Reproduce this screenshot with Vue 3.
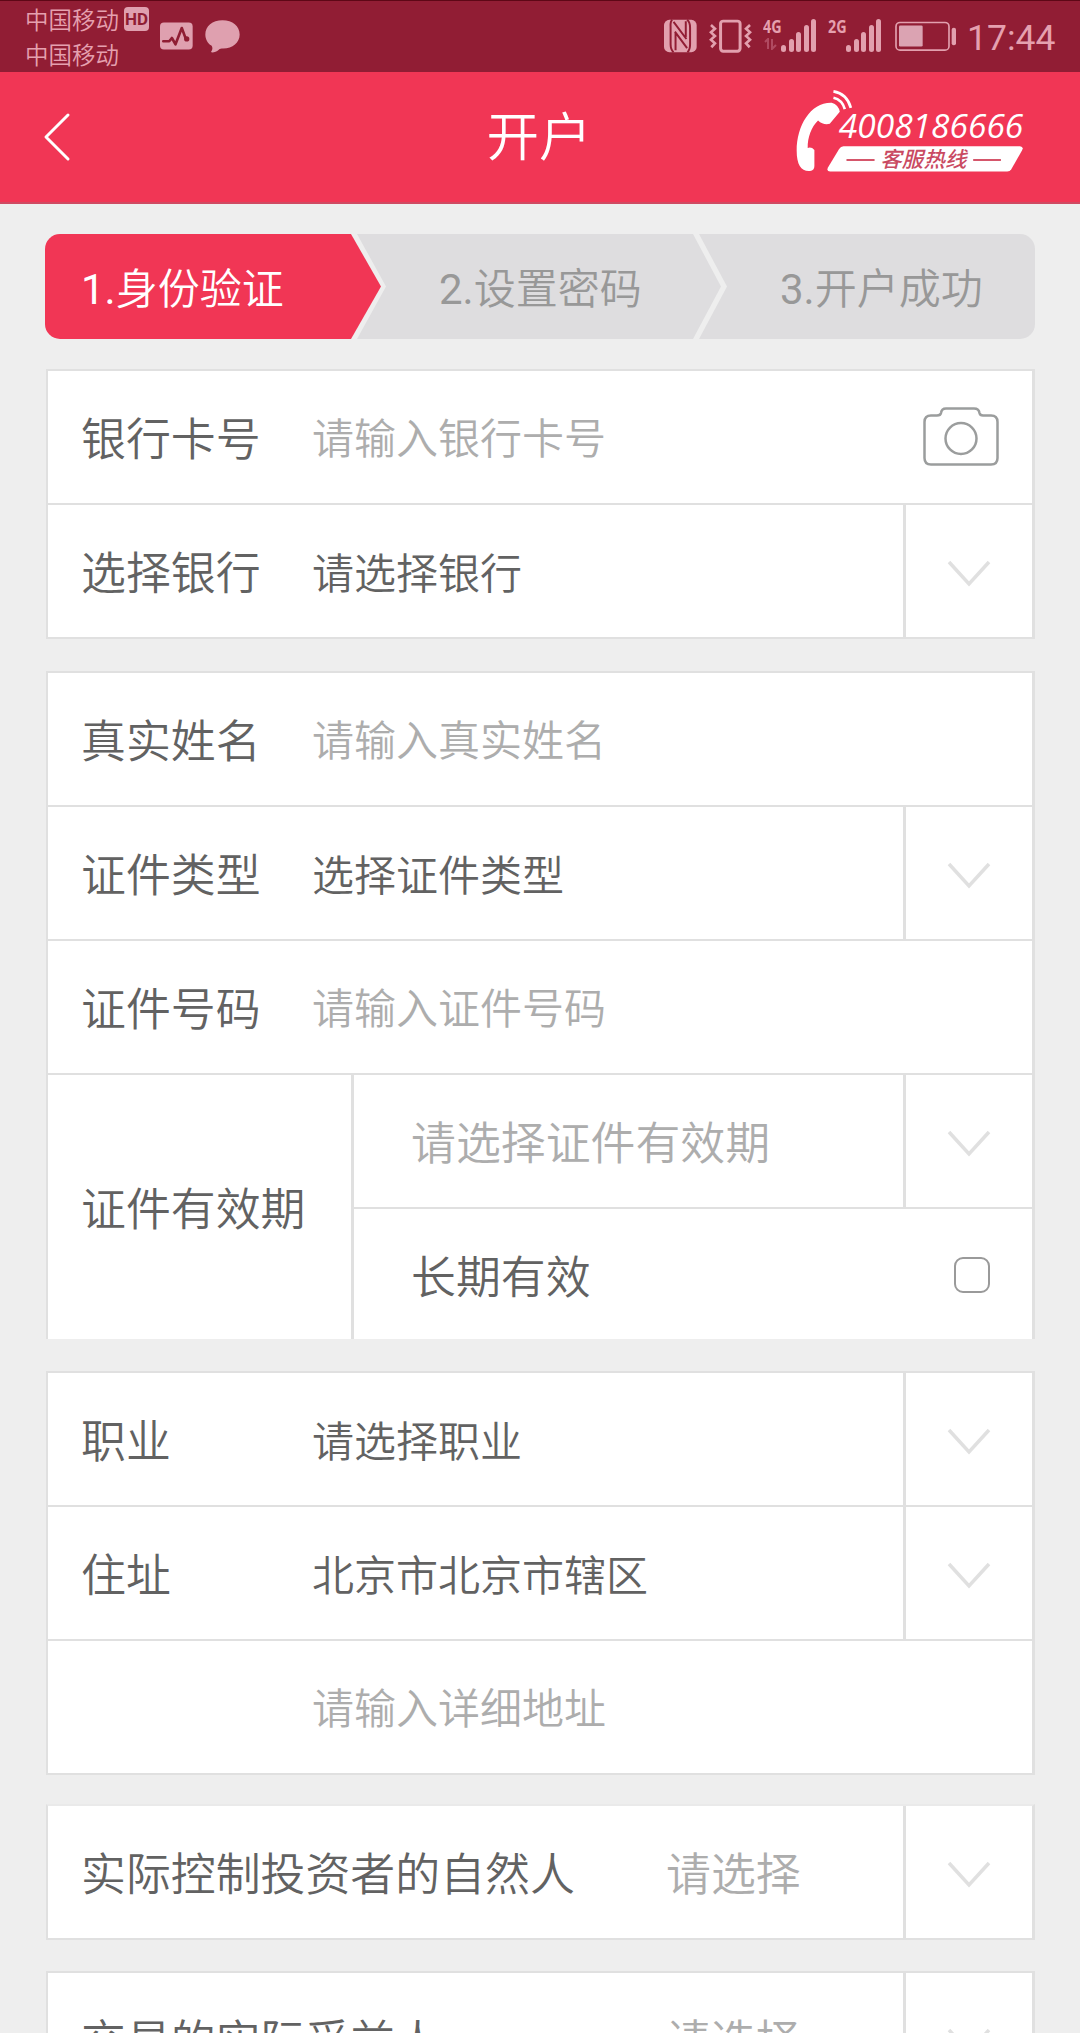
<template>
  <div class="page">
    <!-- 状态栏 -->
    <div class="status-bar">
      <div class="carriers">
        <div class="carrier">中国移动<span class="hd">HD</span></div>
        <div class="carrier">中国移动</div>
      </div>
      <svg class="icon-activity" viewBox="480 68 100 84">
        <rect x="480" y="69" width="99" height="82" rx="12" fill="#dfa0af" />
        <path d="M490 126 H508 L516 116 L527 135 L546 86 L558 118" fill="none" stroke="#8f1d33" stroke-width="8" stroke-linecap="round" stroke-linejoin="round" />
        <circle cx="561" cy="119" r="8" fill="#8f1d33" />
      </svg>
      <svg class="icon-chat" viewBox="614 62 104 98">
        <path d="M666 63 C696 63 717 81 717 105 C717 129 696 147 668 147 C662 147 658 147 655 150 C648 156 640 159 633 158 C630 157 634 154 635 151 C637 147 636 142 633 138 C621 131 615 118 615 105 C615 81 636 63 666 63 Z" fill="#dfa0af" />
      </svg>

      <div class="status-right">
        <svg class="icon-nfc" viewBox="68 58 100 102">
          <rect x="68" y="60" width="99" height="98" rx="16" fill="#e2a0ae" />
          <path d="M93 60 C86 66 88 76 88 84 V134 C88 144 90 152 97 158 M97 66 L136 118 M101 96 L138 146 M103 98 V152 M134 64 V112 M138 60 C146 66 147 74 147 84 V134 C147 146 146 152 139 158" fill="none" stroke="#911d34" stroke-width="6" />
        </svg>
        <svg class="icon-vibrate" viewBox="202 58 130 102" fill="none" stroke="#e2a0ae">
          <rect x="237" y="64" width="59" height="91" rx="8" stroke-width="9" />
          <path d="M208 76 L220 87 L208 98 L220 109 L208 120 L220 131 L209 143" stroke-width="8" />
          <path d="M326 76 L314 87 L326 98 L314 109 L326 120 L314 131 L325 143" stroke-width="8" />
        </svg>
        <div v-for="net in networks" :key="net" class="signal">
          <span class="net">{{ net }}</span>
          <svg v-if="net === '4G'" class="transfer" viewBox="0 0 14 12">
            <path d="M2 4 L5 1 V11 M9 1 V11 L13 7" fill="none" stroke="#b04a61" stroke-width="2" />
          </svg>
          <div class="bars">
            <i v-for="h in bars" :key="h" :style="{ height: h + 'px' }"></i>
          </div>
        </div>
        <svg class="icon-battery" viewBox="766 64 186 92">
          <rect x="769" y="68" width="159" height="83" rx="12" fill="none" stroke="#e2a0ae" stroke-width="5" />
          <rect x="778" y="77" width="71" height="63" rx="4" fill="#dba3b2" />
          <rect x="936" y="84" width="13" height="52" rx="6" fill="#e2a0ae" />
        </svg>
        <span class="clock">17:44</span>
      </div>
    </div>

    <!-- 顶部导航 -->
    <header class="nav">
      <svg class="back" viewBox="0 0 30 50">
        <path d="M26 3 L4 25 L26 47" fill="none" stroke="#fff" stroke-width="3" stroke-linecap="round" stroke-linejoin="round" />
      </svg>
      <h1>开户</h1>
      <svg class="hotline" viewBox="100 50 700 260">
        <path d="M213 97 C150 95 108 165 108 240 C108 284 122 303 148 301 Q161 299 161 286 L161 238 Q152 228 141 232 C140 200 153 168 172 150 Q188 165 207 160 L237 124 Q233 103 213 97 Z" fill="#fff" />
        <path d="M218 82 Q244 88 252 116 M218 63 Q258 70 270 112" fill="none" stroke="#fff" stroke-width="8" />
        <text class="hotline-num" x="234" y="203" textLength="552" lengthAdjust="spacingAndGlyphs">4008186666</text>
        <path d="M248 227 H776 Q788 228 782 240 L750 296 Q746 303 738 303 H208 Q196 302 202 290 L235 235 Q240 227 248 227 Z" fill="#fff" />
        <path d="M257 268 H341 M636 268 H719" stroke="#d5566b" stroke-width="6" />
        <text class="hotline-label" x="358" y="288" textLength="258">客服热线</text>
      </svg>
    </header>

    <!-- 步骤条 -->
    <div class="steps">
      <div v-for="(step, index) in steps" :key="step" class="step" :class="['step-' + (index + 1), { active: index === current }]">
        <span class="num">{{ index + 1 }}.</span>{{ step }}
      </div>
    </div>

    <!-- 表单 -->
    <section v-for="(group, g) in groups" :key="g" class="card" :class="group.class">
      <div v-for="row in group.rows" :key="row.label" class="row">
        <template v-if="row.type === 'period'">
          <div class="period-label">{{ row.label }}</div>
          <div class="period">
            <div class="row">
              <span class="period-text muted">请选择证件有效期</span>
              <div class="arrow">
                <svg viewBox="0 0 44 28"><path d="M2 3 L22 25 L42 3" /></svg>
              </div>
            </div>
            <div class="row">
              <span class="period-text">长期有效</span>
              <input v-model="longTerm" type="checkbox" />
            </div>
          </div>
        </template>
        <template v-else>
          <label :class="{ wide: row.wide }">{{ row.label }}</label>
          <input v-if="row.type === 'input'" type="text" :placeholder="row.text" />
          <span v-else class="value" :class="{ muted: row.wide, big: row.wide }">{{ row.text }}</span>
          <svg v-if="row.camera" class="camera" viewBox="0 0 76 60">
            <path d="M8 8.5 H14 Q17.500 8.500 18 6 Q18.500 1.500 23 1.500 H51 Q56 1.500 56.500 6 Q57 8.500 60 8.500 H68 Q74.500 8.500 74.500 15 V51 Q74.500 57.500 68 57.500 H8 Q1.500 57.500 1.500 51 V15 Q1.500 8.500 8 8.500 Z" />
            <circle cx="38" cy="31.500" r="15.500" />
          </svg>
          <div v-if="row.type === 'select'" class="arrow">
            <svg viewBox="0 0 44 28"><path d="M2 3 L22 25 L42 3" /></svg>
          </div>
        </template>
      </div>
    </section>
  </div>
</template>

<script setup>
import { ref } from 'vue'

const networks = ['4G', '2G']
const bars = [7, 13, 20, 27, 33]

const steps = ['身份验证', '设置密码', '开户成功']
const current = ref(0)
const longTerm = ref(false)

const groups = [
  {
    rows: [
      { label: '银行卡号', type: 'input', text: '请输入银行卡号', camera: true },
      { label: '选择银行', type: 'select', text: '请选择银行' }
    ]
  },
  {
    class: 'no-bottom',
    rows: [
      { label: '真实姓名', type: 'input', text: '请输入真实姓名' },
      { label: '证件类型', type: 'select', text: '选择证件类型' },
      { label: '证件号码', type: 'input', text: '请输入证件号码' },
      { label: '证件有效期', type: 'period' }
    ]
  },
  {
    rows: [
      { label: '职业', type: 'select', text: '请选择职业' },
      { label: '住址', type: 'select', text: '北京市北京市辖区' },
      { label: '', type: 'input', text: '请输入详细地址' }
    ]
  },
  {
    class: 'no-top',
    rows: [{ label: '实际控制投资者的自然人', type: 'select', text: '请选择', wide: true }]
  },
  {
    rows: [{ label: '交易的实际受益人', type: 'select', text: '请选择', wide: true }]
  }
]
</script>

<style>
body {
  margin: 0;
  background: #eeeeee;
}
</style>

<style scoped>
* {
  box-sizing: border-box;
}

.page {
  width: 1080px;
  height: 2033px;
  overflow: hidden;
  background: #eeeeee;
  font-family: Roboto, "Noto Sans CJK SC", sans-serif;
  font-weight: 350;
  color: #626262;
}

/* 状态栏 */
.status-bar {
  display: flex;
  align-items: flex-start;
  height: 72px;
  padding: 0 21px 0 25px;
  background: #911d34;
  border-top: 1px solid #5e0716;
  color: #e5a0af;
}

.carriers {
  width: 135px;
}

.carrier {
  display: flex;
  align-items: center;
  height: 35px;
  font-size: 23.5px;
}

.hd {
  width: 25px;
  height: 24px;
  margin-left: 5px;
  border-radius: 4px;
  background: #dfa0af;
  color: #8f1d33;
  font-size: 17px;
  font-weight: 700;
  line-height: 25px;
  text-align: center;
}

.icon-activity {
  width: 33px;
  height: 28px;
  margin-top: 21px;
}

.icon-chat {
  width: 35px;
  height: 33px;
  margin: 19px 0 0 12px;
}

.status-right {
  display: flex;
  margin-left: auto;
}

.icon-nfc {
  width: 33px;
  height: 34px;
  margin-top: 18px;
}

.icon-vibrate {
  width: 43px;
  height: 34px;
  margin: 18px 11px 0 12px;
}

.signal {
  display: grid;
  grid-template-columns: 18px 35px;
  grid-template-rows: 20px 14px;
  margin: 17px 12px 0 0;
}

.net {
  font-family: "Open Sans", sans-serif;
  font-size: 18px;
  font-weight: 700;
  line-height: 17px;
  transform: scaleX(0.8);
  transform-origin: left;
}

.transfer {
  grid-area: 2 / 1;
  width: 14px;
  height: 12px;
}

.bars {
  display: flex;
  grid-area: 1 / 2 / 3 / 3;
  gap: 2.500px;
  align-items: flex-end;
}

.bars i {
  width: 5px;
  border-radius: 2.500px;
  background: #e2a0ae;
}

.icon-battery {
  width: 62px;
  height: 31px;
  margin: 20px 10px 0 2px;
}

.clock {
  width: 92px;
  margin-top: 14px;
  font-size: 35.5px;
  font-weight: 400;
  line-height: 46px;
}

/* 顶部导航 */
.nav {
  display: grid;
  grid-template-columns: 1fr 200px 1fr;
  align-items: center;
  height: 132px;
  padding: 0 47px 0 42px;
  border-bottom: 2px solid #cf4a62;
  background: #f13655;
}

.back {
  width: 30px;
  height: 50px;
}

h1 {
  margin: 2px 0 0 3px;
  color: #fff;
  font-size: 52.5px;
  font-weight: 350;
  line-height: 70px;
  text-align: center;
}

.hotline {
  justify-self: end;
  width: 234px;
  height: 87px;
  margin: 0 5px 13px 0;
}

.hotline-num {
  fill: #fff;
  font-family: "Open Sans", sans-serif;
  font-size: 100px;
  font-style: italic;
  font-weight: 500;
}

.hotline-label {
  fill: #c94a62;
  font-family: "Noto Sans CJK SC", sans-serif;
  font-size: 64px;
  font-style: italic;
  font-weight: 500;
}

/* 步骤条 */
.steps {
  display: flex;
  height: 105px;
  margin: 30px 45px 30px;
  border-radius: 15px;
  overflow: hidden;
}

.step {
  height: 105px;
  background: #dedddf;
  color: #989898;
  font-size: 42px;
  line-height: 112px;
  white-space: nowrap;
}

.step.active {
  background: #f13655;
  color: #fff;
}

.num {
  font-weight: 400;
}

.step-1 {
  width: 336px;
  padding-left: 36px;
  clip-path: polygon(0 0, 306px 0, 100% 50%, 306px 100%, 0 100%);
}

.step-2 {
  width: 364px;
  margin-left: -24px;
  padding-left: 82px;
  clip-path: polygon(0 0, 336px 0, 100% 50%, 336px 100%, 0 100%, 29px 50%);
}

.step-3 {
  flex: 1;
  margin-left: -22px;
  padding-left: 81px;
  clip-path: polygon(0 0, 100% 0, 100% 100%, 0 100%, 28px 50%);
}

/* 表单 */
.card {
  margin: 0 45px 32px 46px;
  border: 2px solid #e0e0e0;
  border-right-width: 3px;
  background: #fff;
}

.row {
  display: flex;
  align-items: center;
  height: 132px;
}

.row + .row {
  height: 134px;
  border-top: 2px solid #e0e0e0;
}

.card > .row:has(.period) {
  height: 266px;
}

.card.no-bottom {
  border-bottom: 0;
}

.card.no-top {
  border-top-color: #eaeaea;
  margin-top: -3px;
  margin-bottom: 31px;
}

label,
.value,
.period-label,
.period-text {
  padding-bottom: 1px;
}

label {
  width: 264px;
  padding-left: 33px;
  font-size: 44.900px;
  white-space: nowrap;
}

label.wide {
  width: 618px;
}

input[type="text"] {
  flex: 1;
  min-width: 0;
  height: 100px;
  padding: 5px 0 0;
  border: 0;
  outline: 0;
  background: transparent;
  font: inherit;
  font-size: 42px;
}

input::placeholder,
.muted {
  color: #adadad;
  opacity: 1;
}

.value {
  flex: 1;
  font-size: 42px;
}

.value.big {
  font-size: 44.900px;
}

.arrow {
  display: flex;
  align-items: center;
  align-self: stretch;
  justify-content: center;
  width: 129px;
  padding-top: 3px;
  border-left: 3px solid #e0e0e0;
}

.arrow svg {
  width: 44px;
  height: 28px;
}

.arrow path {
  fill: none;
  stroke: #e0e0e0;
  stroke-width: 3.500;
}

.camera {
  width: 76px;
  height: 60px;
  margin-right: 33px;
  fill: none;
  stroke: #9b9d9d;
  stroke-width: 2.500;
}

.period-label {
  width: 303px;
  padding-left: 33px;
  font-size: 44.900px;
}

.period {
  flex: 1;
  align-self: stretch;
  border-left: 3px solid #e0e0e0;
}

.period-text {
  flex: 1;
  padding-left: 57px;
  font-size: 44.900px;
}

input[type="checkbox"] {
  width: 36px;
  height: 36px;
  margin: 0 42px 0 0;
  border: 2px solid #9a9a9a;
  border-radius: 9px;
  background: #fff;
  appearance: none;
}
</style>
